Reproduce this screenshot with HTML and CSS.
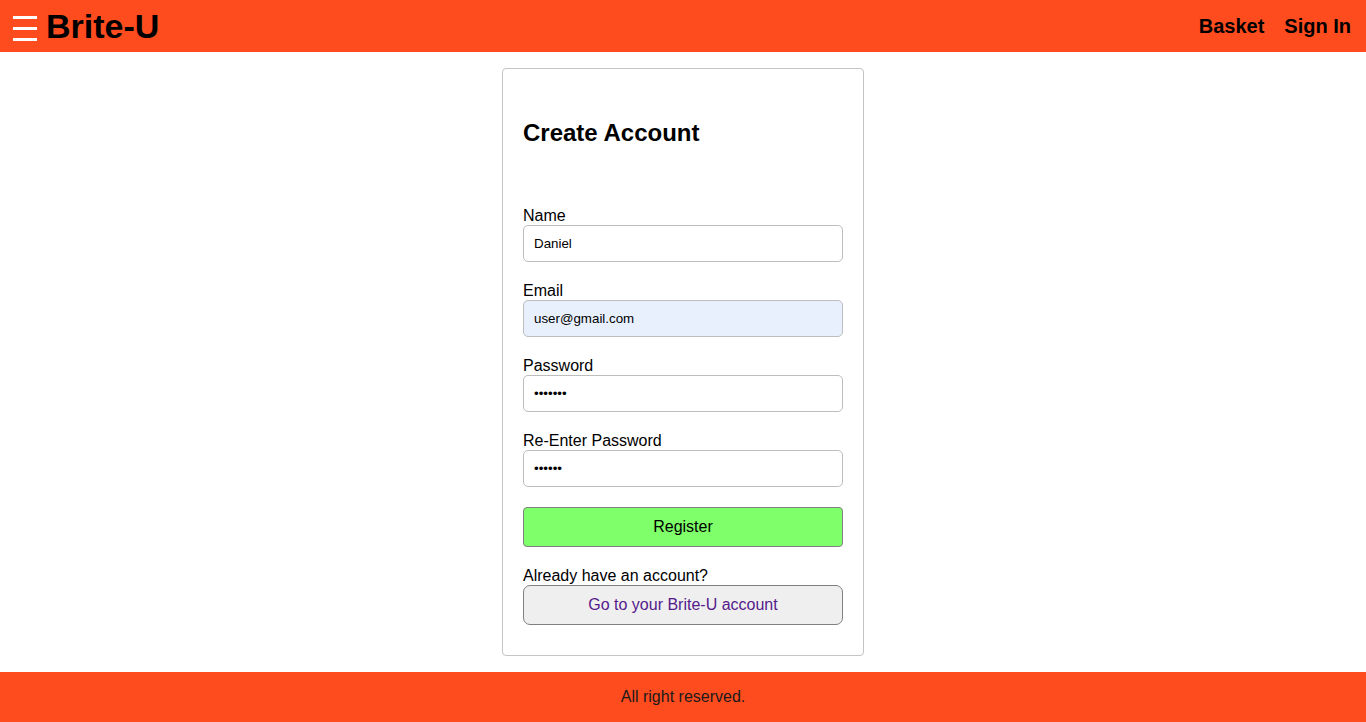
FILE: index.html
```html
<!DOCTYPE html>
<html lang="en">
<head>
<meta charset="utf-8">
<title>Brite-U - Create Account</title>
<link rel="stylesheet" href="styles.css">
</head>
<body>
<header class="topbar">
  <div class="brand">
    <svg class="menu-icon" width="26" height="30" viewBox="0 0 26 30" aria-hidden="true">
      <rect x="1" y="4" width="24" height="3" fill="#fff"/>
      <rect x="1" y="15" width="24" height="3" fill="#fff"/>
      <rect x="1" y="26" width="24" height="3" fill="#fff"/>
    </svg>
    <span class="logo">Brite-U</span>
  </div>
  <nav class="nav">
    <a class="nav-link" href="#">Basket</a>
    <a class="nav-link" href="#">Sign In</a>
  </nav>
</header>

<main class="main">
  <section class="card">
    <h2 class="title">Create Account</h2>
    <form class="form">
      <div class="field">
        <label class="label">Name</label>
        <input class="input" type="text" value="Daniel">
      </div>
      <div class="field">
        <label class="label">Email</label>
        <input class="input input-filled" type="email" value="user@gmail.com">
      </div>
      <div class="field">
        <label class="label">Password</label>
        <input class="input" type="password" value="1234567">
      </div>
      <div class="field">
        <label class="label">Re-Enter Password</label>
        <input class="input" type="password" value="123456">
      </div>
      <button class="btn btn-register" type="button">Register</button>
      <div class="already">Already have an account?</div>
      <a class="btn btn-account" href="#">Go to your Brite-U account</a>
    </form>
  </section>
</main>

<footer class="footer">All right reserved.</footer>
</body>
</html>
```

FILE: styles.css
```css
* { box-sizing: border-box; }

html, body {
  margin: 0;
  padding: 0;
}

body {
  font-family: "Liberation Sans", Arial, sans-serif;
  font-size: 16px;
  color: #000;
  background: #fff;
}

.topbar {
  height: 52px;
  background: #ff4c1f;
  display: flex;
  align-items: center;
  justify-content: space-between;
  padding: 0 15px 0 12px;
}

.brand {
  display: flex;
  align-items: center;
  gap: 8px;
}

.menu-icon {
  display: block;
  margin-top: 2px;
}

.logo {
  font-size: 34px;
  font-weight: bold;
  color: #000;
  line-height: 1;
}

.nav {
  display: flex;
  gap: 20px;
}

.nav-link {
  font-size: 20px;
  font-weight: bold;
  color: #000;
  text-decoration: none;
}

.main {
  display: flex;
  justify-content: center;
  padding: 16px 0;
}

.card {
  width: 362px;
  border: 1px solid #c4c4c4;
  border-radius: 4px;
  padding: 30px 20px;
}

.title {
  font-size: 24px;
  font-weight: bold;
  margin: 20px 0 60px;
}

.form {
  display: flex;
  flex-direction: column;
}

.field {
  display: flex;
  flex-direction: column;
  margin-bottom: 20px;
}

.label {
  font-size: 16px;
  line-height: 18px;
}

.input {
  height: 37px;
  border: 1px solid #bdbdbd;
  border-radius: 5px;
  padding: 0 10px;
  font-family: "Liberation Sans", Arial, sans-serif;
  font-size: 13.33px;
  color: #000;
  background: #fff;
  outline: none;
}

.input-filled {
  background: #e8f0fe;
}

.btn {
  height: 40px;
  border: 1px solid #808080;
  border-radius: 4px;
  font-family: "Liberation Sans", Arial, sans-serif;
  font-size: 16px;
  display: flex;
  align-items: center;
  justify-content: center;
  text-decoration: none;
}

.btn-register {
  background: #7fff6a;
  color: #000;
  margin-bottom: 20px;
}

.already {
  font-size: 16px;
  line-height: 18px;
}

.btn-account {
  background: #efefef;
  color: #551a8b;
  border-radius: 7px;
}

.footer {
  height: 50px;
  background: #ff4c1f;
  display: flex;
  align-items: center;
  justify-content: center;
  font-size: 16px;
  color: #1a1a1a;
}
```
